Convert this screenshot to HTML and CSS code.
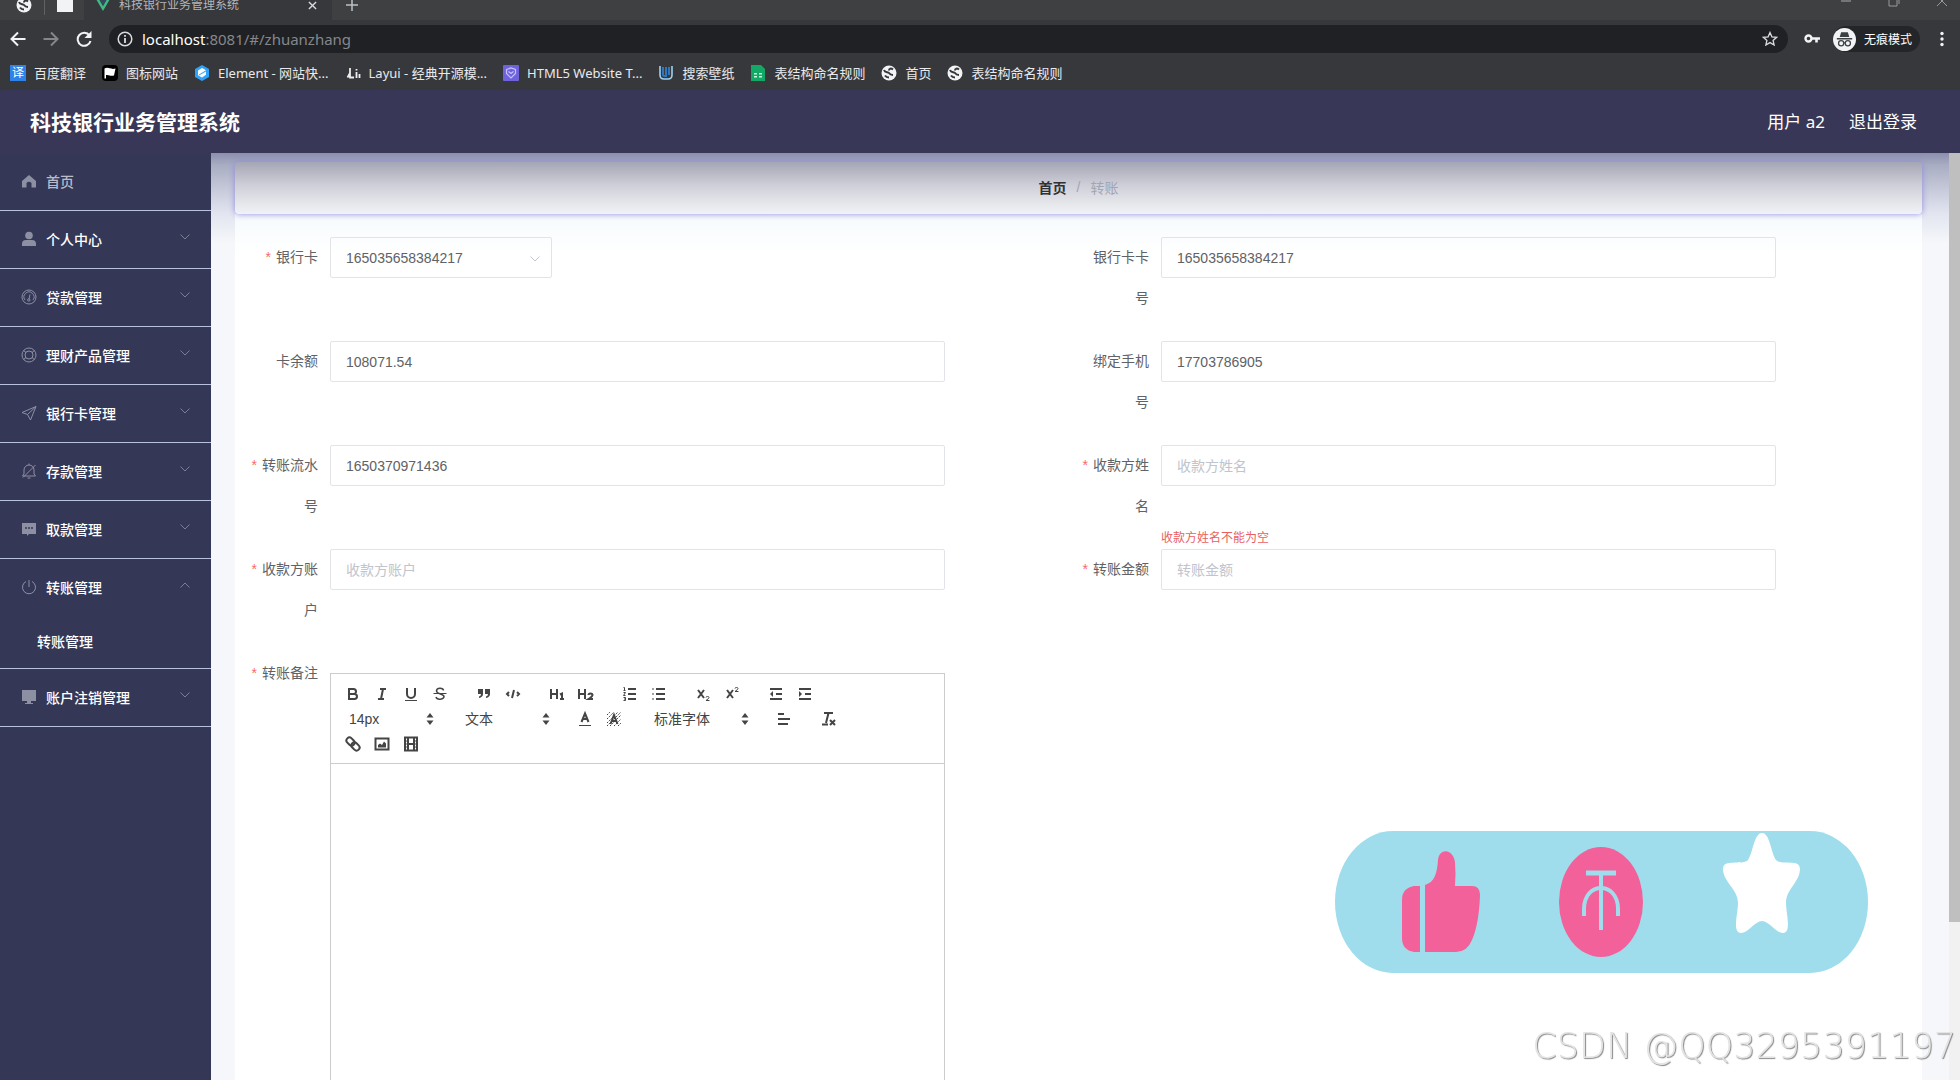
FILE: index.html
```html
<!DOCTYPE html>
<html lang="zh-CN">
<head>
<meta charset="utf-8">
<title>科技银行业务管理系统</title>
<link rel="stylesheet" href="styles.css">
</head>
<body>
<svg class="defs" aria-hidden="true">
  <symbol id="globe" viewBox="0 0 16 16"><circle cx="8" cy="8" r="7.5" fill="#f1f3f4"/><path d="M3 5c1 3 4 1.500 5 3s2 2 4 2M12 4.500c-2-1.500-4-1-4 1M8 12.500c-1.500 0-3-.5-4-2" fill="none" stroke="#35363a" stroke-width="2"/></symbol>
  <symbol id="down" viewBox="0 0 12 12"><path d="M1.500 3.500 6 8l4.500-4.500" fill="none" stroke="currentColor"/></symbol>
  <symbol id="updown" viewBox="0 0 18 18"><path d="M5.500 7.500 9 3l3.500 4.500zM5.500 10.500 9 15l3.500-4.500z" fill="#444"/></symbol>
</svg>

<header class="browser">
  <div class="tabs">
    <svg class="i16" viewBox="0 0 16 16"><use href="#globe"/></svg>
    <i class="tab-line"></i>
    <svg class="i16" viewBox="0 0 16 16"><path d="M0 1h6l2 2h8v12H0z" fill="#f1f3f4"/></svg>
    <div class="tab">
      <svg class="i16" viewBox="0 0 16 16"><path d="M1 2h3l4 7 4-7h3L8 14z" fill="#41b883"/><path d="M4 2h3l1 2 1-2h3L8 9z" fill="#35495e"/></svg>
      <span>科技银行业务管理系统</span>
      <svg class="tab-close" viewBox="0 0 10 10"><path d="m1 1 8 8M9 1 1 9" stroke="#dadce0" stroke-width="1.500"/></svg>
    </div>
    <svg class="tab-new" viewBox="0 0 12 12"><path d="M6 0v12M0 6h12" stroke="#bdc1c6" stroke-width="1.500"/></svg>
    <div class="win">
      <svg class="i12" viewBox="0 0 12 12"><path d="M1 6h10" stroke="#aaa"/></svg>
      <svg class="i12" viewBox="0 0 12 12"><path d="M1 3h8v8H1zM3 1h8v8" fill="none" stroke="#999"/></svg>
      <svg class="i12" viewBox="0 0 12 12"><path d="m1 1 10 10M11 1 1 11" stroke="#999"/></svg>
    </div>
  </div>
  <div class="toolbar">
    <button class="nav-btn" aria-label="后退"><svg viewBox="0 0 16 16"><path d="M15.500 8H2M8 1.500 1.500 8 8 14.500" fill="none" stroke="#f1f3f4" stroke-width="2"/></svg></button>
    <button class="nav-btn" aria-label="前进"><svg viewBox="0 0 16 16"><path d="M.5 8H14M8 1.500 14.500 8 8 14.500" fill="none" stroke="#85868a" stroke-width="2"/></svg></button>
    <button class="nav-btn" aria-label="刷新"><svg viewBox="0 0 16 16"><path d="M13.500 4.500A6.500 6.500 0 1 0 14.500 10" fill="none" stroke="#f1f3f4" stroke-width="2"/><path d="M15.500 0v7h-7z" fill="#f1f3f4"/></svg></button>
    <div class="address">
      <svg class="i16" viewBox="0 0 16 16"><circle cx="8" cy="8" r="6.800" fill="none" stroke="#dadce0" stroke-width="1.500"/><path d="M8 7v5M8 4v1.800" stroke="#dadce0" stroke-width="1.800"/></svg>
      <span class="url"><b>localhost</b>:8081/#/zhuanzhang</span>
      <svg class="i16" viewBox="0 0 16 16"><path d="m8 1.500 1.900 4.300 4.700.5-3.500 3.100 1 4.600L8 11.600 3.900 14l1-4.600-3.500-3.100 4.700-.5z" fill="none" stroke="#dadce0" stroke-width="1.300"/></svg>
    </div>
    <svg class="i16" viewBox="0 0 16 16"><circle cx="4.500" cy="7.500" r="3" fill="none" stroke="#f1f3f4" stroke-width="2.400"/><path d="M8 7.500h8M12.500 8v3.500" stroke="#f1f3f4" stroke-width="2.600"/></svg>
    <div class="incognito">
      <svg viewBox="0 0 24 24"><circle cx="12" cy="12" r="12" fill="#f1f3f4"/><path d="M8.500 4.500h7l1.500 5H7zM4 10.500h16v1.500H4z" fill="#3c4043"/><g fill="none" stroke="#3c4043" stroke-width="1.300"><circle cx="8.500" cy="16" r="2.700"/><circle cx="15.500" cy="16" r="2.700"/><path d="M11 15.500h2"/></g></svg>
      <span>无痕模式</span>
    </div>
    <svg class="i16" viewBox="0 0 16 16" fill="#f1f3f4"><circle cx="8" cy="2.500" r="1.700"/><circle cx="8" cy="8" r="1.700"/><circle cx="8" cy="13.500" r="1.700"/></svg>
  </div>
  <nav class="bookmarks">
    <a href="#"><i class="fav fav-yi">译</i>百度翻译</a>
    <a href="#"><svg class="i16" viewBox="0 0 16 16"><rect width="16" height="16" rx="4" fill="#000"/><path d="M2.500 13.500V3.500c4-2 6 1.500 11 0L12 10.500c-4 1-4.500-1-8-.5v3.500z" fill="#fff"/></svg>图标网站</a>
    <a href="#"><svg class="i16" viewBox="0 0 16 16"><path d="m8 0 7 4v8l-7 4-7-4V4z" fill="#2ea3f7"/><path d="m8 3 4 2.300L5 9.500v1l7-4v3.200L8 12.500l-4-2.300V5.500z" fill="#fff"/></svg>Element - 网站快...</a>
    <a href="#"><svg class="i16" viewBox="0 0 16 16"><path d="M5 3v9.500h4M2.500 12.500 5 8M11.500 7v6M14.500 9v4M11.500 4v1.500" fill="none" stroke="#eee" stroke-width="1.800"/></svg>Layui - 经典开源模...</a>
    <a href="#"><svg class="i16" viewBox="0 0 16 16"><rect width="16" height="16" rx="1" fill="#6f62dd"/><path d="M3.500 4.500 8 3l4.500 1.500v4L8 13 3.500 8.500zM5.500 6.500 8 8.500l2.500-2" fill="none" stroke="#c7c2ff" stroke-width="1.200"/></svg>HTML5 Website T...</a>
    <a href="#"><svg class="i16" viewBox="0 0 16 16"><path d="M2 1v9q0 4 4 4h4q4 0 4-4V1" fill="none" stroke="#9fd0ef" stroke-width="1.600"/><path d="M5 2v8q0 1 1.500 1H8V2M11 2v8" fill="none" stroke="#2f76bd" stroke-width="2"/></svg>搜索壁纸</a>
    <a href="#"><svg class="i16" viewBox="0 0 16 16"><path d="M1 0h10l4 4v12H1z" fill="#12a866"/><path d="M4 8h3v1.500H4zM9 8h3v1.500H9zM4 11h3v1.500H4zM9 11h3v1.500H9z" fill="#c8f5dd"/></svg>表结构命名规则</a>
    <a href="#"><svg class="i16" viewBox="0 0 16 16"><use href="#globe"/></svg>首页</a>
    <a href="#"><svg class="i16" viewBox="0 0 16 16"><use href="#globe"/></svg>表结构命名规则</a>
  </nav>
</header>

<div class="app-header">
  <h1>科技银行业务管理系统</h1>
  <span>用户 a2</span>
  <a href="#">退出登录</a>
</div>

<div class="app">
  <nav class="sidebar">
    <a class="item home" href="#"><svg class="mi" viewBox="0 0 16 16"><path d="M8 2 1 8v6.500h4.500V10q2.500-2.500 5 0v4.500H15V8z" fill="currentColor"/></svg><span>首页</span></a>
    <button class="item"><svg class="mi" viewBox="0 0 16 16" fill="currentColor"><circle cx="8" cy="4.500" r="3.800"/><path d="M1 15v-2q0-4 4-4h6q4 0 4 4v2z"/></svg><span>个人中心</span><svg class="arrow"><use href="#down"/></svg></button>
    <button class="item"><svg class="mi" viewBox="0 0 16 16" fill="none" stroke="currentColor"><circle cx="8" cy="8" r="7"/><path d="M4 11a5 5 0 1 1 8 0M9 5.500 8 10"/><circle cx="7.800" cy="11" r="1.200"/></svg><span>贷款管理</span><svg class="arrow"><use href="#down"/></svg></button>
    <button class="item"><svg class="mi" viewBox="0 0 16 16" fill="none" stroke="currentColor"><circle cx="8" cy="8" r="7"/><circle cx="8" cy="8" r="4"/><path d="M2.500 3.500 5 5.500M13.500 3.500 11 5.500M2.500 12.500 5 10.500M13.500 12.500 11 10.500"/></svg><span>理财产品管理</span><svg class="arrow"><use href="#down"/></svg></button>
    <button class="item"><svg class="mi" viewBox="0 0 16 16" fill="none" stroke="currentColor"><path d="M15 1.500 1 7.500l5.500 2L9.500 15zM6.500 9.500 15 1.500"/></svg><span>银行卡管理</span><svg class="arrow"><use href="#down"/></svg></button>
    <button class="item"><svg class="mi" viewBox="0 0 16 16" fill="none" stroke="currentColor"><path d="M1.500 13H14.500L13 11V7A5 5 0 0 0 3 7v4zM8 2V0.500M6.500 15h3M14.500 2 2 14.500"/></svg><span>存款管理</span><svg class="arrow"><use href="#down"/></svg></button>
    <button class="item"><svg class="mi" viewBox="0 0 16 16"><path d="M1 2h14v11H8l-2 2v-2H1z" fill="currentColor"/><path d="M4 7h2M7 7h2M10 7h2" stroke="#353958" stroke-width="1.500"/></svg><span>取款管理</span><svg class="arrow"><use href="#down"/></svg></button>
    <button class="item open" aria-expanded="true"><svg class="mi" viewBox="0 0 16 16" fill="none" stroke="currentColor"><path d="M5 2.500a6.500 6.500 0 1 0 6 0M8 1v7"/></svg><span>转账管理</span><svg class="arrow"><use href="#down"/></svg></button>
    <a class="sub" href="#">转账管理</a>
    <button class="item"><svg class="mi" viewBox="0 0 16 16" fill="currentColor"><path d="M1 1h14v11H1zM4 14h8v1H4zM6 12h4v2H6z"/></svg><span>账户注销管理</span><svg class="arrow"><use href="#down"/></svg></button>
  </nav>

  <main class="main">
    <div class="crumbs"><a href="#">首页</a><i>/</i><span>转账</span></div>
    <form class="form">
      <div class="field">
        <label class="req" for="card">银行卡</label>
        <div class="ctl"><div class="select"><select id="card"><option>165035658384217</option></select><svg><use href="#down"/></svg></div></div>
      </div>
      <div class="field">
        <label for="cardno">银行卡卡号</label>
        <div class="ctl"><input id="cardno" type="text" value="165035658384217"></div>
      </div>
      <div class="field">
        <label for="balance">卡余额</label>
        <div class="ctl"><input id="balance" type="text" value="108071.54"></div>
      </div>
      <div class="field">
        <label for="phone">绑定手机号</label>
        <div class="ctl"><input id="phone" type="text" value="17703786905"></div>
      </div>
      <div class="field">
        <label class="req" for="serial">转账流水号</label>
        <div class="ctl"><input id="serial" type="text" value="1650370971436"></div>
      </div>
      <div class="field">
        <label class="req" for="payee">收款方姓名</label>
        <div class="ctl"><input id="payee" type="text" placeholder="收款方姓名"><p class="error">收款方姓名不能为空</p></div>
      </div>
      <div class="field">
        <label class="req" for="account">收款方账户</label>
        <div class="ctl"><input id="account" type="text" placeholder="收款方账户"></div>
      </div>
      <div class="field">
        <label class="req" for="amount">转账金额</label>
        <div class="ctl"><input id="amount" type="text" placeholder="转账金额"></div>
      </div>
      <div class="field">
        <label class="req" id="remark">转账备注</label>
        <div class="ctl">
          <div class="editor">
            <div class="ql">
              <div class="ql-row">
                <div class="grp">
                  <button type="button" aria-label="粗体"><svg viewBox="0 0 18 18"><path d="M5 4h4.500a2.500 2.500 0 0 1 0 5H5zM5 9h5.500a2.500 2.500 0 0 1 0 5H5z"/></svg></button>
                  <button type="button" aria-label="斜体"><svg viewBox="0 0 18 18"><path d="M7 4h6M5 14h6M8 14l2-10"/></svg></button>
                  <button type="button" aria-label="下划线"><svg viewBox="0 0 18 18"><path d="M5 3v6a4 4 0 0 0 8 0V3"/><path class="f" d="M3 15h12v1H3z"/></svg></button>
                  <button type="button" aria-label="删除线"><svg viewBox="0 0 18 18"><path class="t" d="M2.500 8.500h13"/><path class="s" d="M12.500 5.500C12 2.500 5.500 2.500 5.500 6S13 8.500 13 11.500s-7 4-8 .5"/></svg></button>
                </div>
                <div class="grp">
                  <button type="button" aria-label="引用"><svg viewBox="0 0 18 18"><path class="f" d="M3 4h5v5q0 3-4 4v-1.500q2-.5 2-2.500H3zM10 4h5v5q0 3-4 4v-1.500q2-.5 2-2.500h-3z"/></svg></button>
                  <button type="button" aria-label="代码"><svg viewBox="0 0 18 18"><path d="M5 7 3 9l2 2M13 7l2 2-2 2M10 5 8 13"/></svg></button>
                </div>
                <div class="grp">
                  <button type="button" aria-label="标题1"><svg viewBox="0 0 18 18"><path d="M3 4v10M9 4v10M3 9h6M12 9.500l2-1V14M12 14h4"/></svg></button>
                  <button type="button" aria-label="标题2"><svg viewBox="0 0 18 18"><path d="M2 4v10M8 4v10M2 9h6M11.500 10q0-1.500 2-1.500t2 1.500-4 4h4.500"/></svg></button>
                </div>
                <div class="grp">
                  <button type="button" aria-label="有序列表"><svg viewBox="0 0 18 18"><path d="M7 4h8M7 9h8M7 14h8"/><path class="t" d="M2.500 2.500h1v3M2.500 5.500h2M2.500 7.500h2L2.500 10.500h2M2.500 12.500h2v3h-2M3 14h1.500"/></svg></button>
                  <button type="button" aria-label="无序列表"><svg viewBox="0 0 18 18"><path d="M6 4h9M6 9h9M6 14h9M2.500 4h1M2.500 9h1M2.500 14h1"/></svg></button>
                </div>
                <div class="grp">
                  <button type="button" aria-label="下标"><svg viewBox="0 0 18 18"><path d="m4 5 6 8M10 5l-6 8"/><path class="t" d="M12 12.500q0-1 1.500-1t1.500 1-3 3h3.500"/></svg></button>
                  <button type="button" aria-label="上标"><svg viewBox="0 0 18 18"><path d="m4 5 6 8M10 5l-6 8"/><path class="t" d="M12 3.500q0-1 1.500-1t1.500 1-3 3h3.500"/></svg></button>
                </div>
                <div class="grp">
                  <button type="button" aria-label="减少缩进"><svg viewBox="0 0 18 18"><path d="M3 14h12M3 4h12M9 9h6"/><path class="f" d="M6 6v6L3 9z"/></svg></button>
                  <button type="button" aria-label="增加缩进"><svg viewBox="0 0 18 18"><path d="M3 14h12M3 4h12M9 9h6"/><path class="f" d="M3 6v6l3-3z"/></svg></button>
                </div>
              </div>
              <div class="ql-row">
                <div class="pick"><select aria-label="字号"><option>14px</option></select><svg><use href="#updown"/></svg></div>
                <div class="pick"><select aria-label="段落"><option>文本</option></select><svg><use href="#updown"/></svg></div>
                <div class="grp">
                  <button type="button" aria-label="文字颜色"><svg viewBox="0 0 18 18"><path class="t" d="M3 15.500h12"/><path d="M5.500 12 9 3.500l3.500 8.500M7 9h4"/></svg></button>
                  <button type="button" aria-label="背景颜色"><svg viewBox="0 0 18 18"><path class="t" d="M2 5l3-3M2 9l7-7M2 13 13 2M2 16 16 2M5 16 16 5M9 16l7-7M13 16l3-3" stroke-dasharray="1.500 1"/><path d="M5.500 14 9 5l3.500 9M7 11h4"/></svg></button>
                </div>
                <div class="pick wide"><select aria-label="字体"><option>标准字体</option></select><svg><use href="#updown"/></svg></div>
                <div class="grp"><button type="button" aria-label="对齐"><svg viewBox="0 0 18 18"><path d="M3 9h12M3 14h10M3 4h6"/></svg></button></div>
                <div class="grp"><button type="button" aria-label="清除格式"><svg viewBox="0 0 18 18"><path d="M5 3h9M9.500 3 7 13M3 14.500h6M11 10l5 5M16 10l-5 5"/></svg></button></div>
              </div>
              <div class="ql-row">
                <div class="grp">
                  <button type="button" aria-label="链接"><svg viewBox="0 0 18 18"><g transform="rotate(45 9 9)"><rect x="1" y="6" width="9" height="6" rx="3"/><rect x="8" y="6" width="9" height="6" rx="3"/></g></svg></button>
                  <button type="button" aria-label="图片"><svg viewBox="0 0 18 18"><path d="M2.500 3.500h13v11h-13z"/><path class="f" d="M5 12.500V10l2-1.500 2 1.500 2-3.500 2 2v4z"/></svg></button>
                  <button type="button" aria-label="视频"><svg viewBox="0 0 18 18"><path d="M3 2.500h12v13H3zM6 3v12M12 3v12M6 9h6"/><path class="t" d="M3 6h3M3 9h3M3 12h3M12 6h3M12 9h3M12 12h3"/></svg></button>
                </div>
              </div>
            </div>
            <div class="area" contenteditable="true" role="textbox" aria-labelledby="remark"></div>
          </div>
        </div>
      </div>
    </form>
  </main>
  <div class="scroll"><div class="thumb"></div></div>
</div>

<svg class="reward" viewBox="0 0 533 142">
  <rect width="533" height="142" rx="58" ry="71" fill="#9fddec"/>
  <g fill="#f26199">
    <path d="M85 55v66h-6q-12-2-12-14V69q0-12 12-14z"/>
    <path d="M90 121V54c10-3 12-12 13-25 1-12 15-12 17 2q1 12 0 24h17q8 0 8 9-1 29-8 45-5 12-16 12z"/>
    <ellipse cx="266" cy="71" rx="42" ry="55"/>
  </g>
  <g fill="none" stroke="#9fddec" stroke-width="4"><path d="M251 42h30" stroke-width="5"/><path d="M266 42v57M249 85V78c0-28 34-28 34 0v7"/></g>
  <path d="M427 2c8 0 9 20 14 27 6 6 24-2 24 9 0 13-14 20-14 34 0 10 6 30-3 30-7 0-14-12-21-12s-14 12-21 12c-9 0-3-20-3-30 0-14-15-21-15-34 0-11 19-3 25-9 5-7 6-27 14-27z" fill="#fff"/>
</svg>
<div class="mark">CSDN @QQ3295391197</div>
</body>
</html>
```
FILE: styles.css
```css
* { box-sizing: border-box; }
body {
  margin: 0;
  height: 100vh;
  display: flex;
  flex-direction: column;
  overflow: hidden;
  background: #fff;
  color: #606266;
  font: 14px "Liberation Sans", "Noto Sans CJK SC", sans-serif;
}
a { color: inherit; text-decoration: none; }
i { font-style: normal; }
button { border: 0; padding: 0; background: none; font: inherit; color: inherit; text-align: left; }
.defs { position: absolute; width: 0; height: 0; }
svg { display: block; flex: none; }
.i16 { width: 16px; height: 16px; }
.i12 { width: 12px; height: 12px; }

/* browser chrome */
.browser { flex: none; background: #37383b; color: #e8eaed; font-family: "Noto Sans", "Noto Sans CJK SC", sans-serif; font-size: 12px; }
.tabs { display: flex; align-items: center; height: 20px; padding: 0 12px 10px 16px; background: #3e4041; overflow: hidden; }
.tab-line { width: 1px; height: 20px; margin: 0 12px; background: #5f6164; }
.tab { display: flex; align-items: center; gap: 8px; width: 248px; height: 30px; margin-left: 11px; padding: 0 15px 0 11px; background: #37383b; color: #b4b6ba; flex: none; }
.tab span { flex: 1; line-height: 12px; white-space: nowrap; }
.tab-close { width: 9px; height: 9px; }
.tab-new { width: 12px; height: 12px; margin-left: 14px; }
.win { display: flex; gap: 36px; margin-left: auto; padding-bottom: 8px; }
.toolbar { display: flex; align-items: center; height: 38px; padding: 0 10px; }
.nav-btn { width: 33px; }
.nav-btn svg { width: 16px; height: 16px; }
.address { flex: 1; display: flex; align-items: center; gap: 9px; height: 28px; margin: 0 16px 0 0; padding: 0 10px 0 8px; border-radius: 14px; background: #202124; }
.url { flex: 1; font-size: 15px; color: #85878b; }
.url b { font-weight: 400; color: #fff; }
.incognito { display: flex; align-items: center; gap: 8px; height: 26px; margin: 0 14px 0 13px; padding-right: 8px; border-radius: 13px; background: #242529; color: #fff; }
.incognito svg { width: 23px; height: 23px; }
.bookmarks { display: flex; align-items: center; gap: 16px; height: 32px; padding: 0 10px 3px; font-size: 13px; white-space: nowrap; }
.bookmarks a { display: flex; align-items: center; gap: 8px; }
.fav-yi { width: 16px; height: 16px; background: #2f83e8; color: #fff; font-size: 12px; line-height: 16px; text-align: center; }

/* application header */
.app-header { flex: none; display: flex; align-items: center; gap: 24px; height: 63px; padding: 0 43px 0 30px; background: #383757; color: #fff; font-family: "Noto Sans", "Noto Sans CJK SC", sans-serif; font-size: 17px; line-height: 24px; }
.app-header h1 { flex: 1; margin: 0; font-size: 21px; line-height: 30px; }
.app { flex: 1; min-height: 0; display: flex; }

/* side menu */
.sidebar { flex: none; width: 211px; background: #353757; color: #fff; overflow: hidden; font-weight: 500; }
.item { display: flex; align-items: center; gap: 9px; width: 100%; height: 58px; padding: 0 20px 2px 21px; border-bottom: 1px solid #b9c1e0; }
.item span { flex: 1; }
.home { color: #b9bbc8; }
.mi { width: 16px; height: 16px; color: #8d90a3; }
.arrow { width: 12px; height: 12px; margin-bottom: 4px; color: #7b7e95; }
.open { border-bottom: 0; }
.open .arrow { transform: rotate(180deg); }
.sub { display: block; height: 52px; padding-left: 37px; line-height: 50px; border-bottom: 1px solid #b9c1e0; }

/* page body */
.main { flex: 1; min-width: 0; padding: 9px 27px 0 24px; background: linear-gradient(#8a8fad, #a9adc2 12px, #e2e5f0 60px, #f5f7fa 90px); overflow: hidden; }
.crumbs { position: relative; display: flex; align-items: center; justify-content: center; gap: 10px; height: 52px; padding-bottom: 2px; border-radius: 4px; background: linear-gradient(#a5a6b4, #cfcfd9 45%, #e9eaed 85%, #f0f1fb); box-shadow: 0 0 6px #8f8be0; color: #a2a5b2; }
.crumbs a { color: #303133; font-weight: 700; }
.form { display: grid; grid-template-columns: 1fr 1fr; padding: 23px 11px 0 14px; min-height: 100%; background: linear-gradient(#f6fafc, #fff 40px); }
.field { display: flex; min-height: 104px; }
.field label { flex: none; width: 81px; padding: 0 12px 0 0; line-height: 41px; text-align: right; }
.req::before { content: "*"; margin-right: 5px; color: #f56c6c; }
.ctl { flex: 1; min-width: 0; display: flex; flex-direction: column; align-items: flex-start; }
.ctl input, .select select { height: 41px; padding: 0 15px; border: 1px solid #e2e4e8; border-radius: 2px; background: transparent; font: inherit; color: #606266; }
.ctl input { width: 82%; }
.ctl input::placeholder { color: #c0c4cc; }
.select { position: relative; width: 222px; }
.select select { width: 100%; appearance: none; }
.select svg { position: absolute; right: 11px; top: 16px; width: 12px; height: 12px; color: #c0c4cc; }
.error { margin: auto 0 0; padding-bottom: 2px; font-size: 12px; line-height: 18px; color: #e85f62; }

/* rich text editor */
.editor { width: 82%; margin-top: 20px; }
.ql { padding: 7px 8px; border: 1px solid #ccc; }
.ql-row { display: flex; gap: 15px; height: 25px; align-items: center; }
.grp { display: flex; }
.grp button { width: 29px; height: 25px; padding: 3px 5px; }
.grp svg { width: 18px; height: 18px; fill: none; stroke: #444; stroke-width: 2; }
.grp .f { fill: #444; stroke: none; }
.grp .t { stroke-width: 1; }
.grp .s { stroke-width: 1.5; }
.pick { position: relative; width: 101px; }
.wide { width: 111px; }
.pick select { width: 100%; height: 25px; padding: 0 10px; border: 0; background: none; appearance: none; font: inherit; color: #444; }
.pick svg { position: absolute; right: 1px; top: 4px; width: 18px; height: 18px; }
.area { min-height: 400px; border: 1px solid #ccc; border-top: 0; }

/* page scrollbar */
.scroll { flex: none; width: 11px; background: #f1f1f1; }
.thumb { height: 83%; background: #bfbfbf; }

/* overlays */
.reward { position: fixed; right: 92px; bottom: 107px; width: 533px; height: 142px; }
.mark { position: fixed; right: 4px; bottom: 14px; font: 200 35px/40px "DejaVu Sans", sans-serif; color: #e4e4e4; text-shadow: 1px 1px 1px #888; }
```
